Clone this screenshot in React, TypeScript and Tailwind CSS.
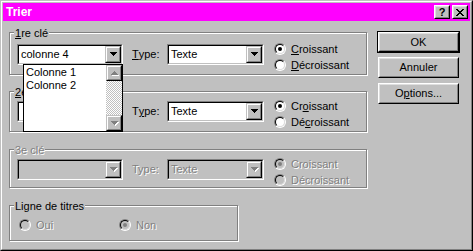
import type { ReactNode } from 'react';

const FONT = "font-['Liberation_Sans',Arial,sans-serif]";
const GRAY_TEXT = 'text-[#808080] [text-shadow:1px_1px_0_#fff]';

function Arrow({ up, disabled }: { up?: boolean; disabled?: boolean }) {
  const rows = up ? [3, 2, 1, 0] : [0, 1, 2, 3];
  const shape = (fill: string, dx: number) =>
    rows.map((r, i) => (
      <rect key={`${fill}${i}`} x={r + dx} y={i + dx} width={7 - r * 2} height={1} fill={fill} />
    ));
  return (
    <svg width="8" height="5" viewBox="0 0 8 5" shapeRendering="crispEdges">
      {disabled ? (
        <>
          {shape('#ffffff', 1)}
          {shape('#808080', 0)}
        </>
      ) : (
        shape('#000000', 0)
      )}
    </svg>
  );
}

function ArrowButton({ up, disabled, className = '' }: { up?: boolean; disabled?: boolean; className?: string }) {
  return (
    <div className={`flex w-[16px] shrink-0 border border-t-[#c0c0c0] border-l-[#c0c0c0] border-b-black border-r-black ${className}`}>
      <div className="flex flex-1 items-center justify-center border border-t-white border-l-white border-b-[#808080] border-r-[#808080] bg-[#c0c0c0] pl-[1px]">
        <Arrow up={up} disabled={disabled} />
      </div>
    </div>
  );
}

function Combo({ width, value, disabled }: { width: string; value?: string; disabled?: boolean }) {
  return (
    <div className={`flex h-[21px] shrink-0 border border-t-[#808080] border-l-[#808080] border-b-white border-r-white ${width}`}>
      <div
        className={`flex flex-1 border border-t-black border-l-black border-b-[#c0c0c0] border-r-[#c0c0c0] ${
          disabled ? 'bg-[#c0c0c0]' : 'bg-white'
        }`}
      >
        <span className={`flex-1 pl-[2px] leading-[17px] ${disabled ? GRAY_TEXT : ''}`}>{value}</span>
        <ArrowButton disabled={disabled} className="h-full" />
      </div>
    </div>
  );
}

function Radio({ checked, disabled }: { checked?: boolean; disabled?: boolean }) {
  return (
    <span className="flex h-[12px] w-[12px] shrink-0 rounded-full border border-t-[#808080] border-l-[#808080] border-b-white border-r-white">
      <span
        className={`flex flex-1 items-center justify-center rounded-full border border-t-black border-l-black border-b-[#dfdfdf] border-r-[#dfdfdf] ${
          disabled ? 'bg-[#c0c0c0]' : 'bg-white'
        }`}
      >
        {checked && (
          <span className={`h-[4px] w-[4px] rounded-full ${disabled ? 'bg-[#808080]' : 'bg-black'}`} />
        )}
      </span>
    </span>
  );
}

function RadioRow({ checked, disabled, children }: { checked?: boolean; disabled?: boolean; children: ReactNode }) {
  return (
    <div className="flex h-[16px] items-center">
      <Radio checked={checked} disabled={disabled} />
      <span className={`ml-[5px] ${disabled ? GRAY_TEXT : ''}`}>{children}</span>
    </div>
  );
}

function Group({ label, className, children }: { label: ReactNode; className: string; children: ReactNode }) {
  return (
    <div className={`flex w-[358px] flex-col border border-[#808080] shadow-[inset_1px_1px_0_#fff,1px_1px_0_#fff] ${className}`}>
      <span className="-mt-[6px] ml-[4px] self-start bg-[#c0c0c0] px-[1px]">{label}</span>
      {children}
    </div>
  );
}

function PushButton({ children, isDefault, className = '' }: { children: ReactNode; isDefault?: boolean; className?: string }) {
  const body = (
    <div className="flex h-full w-full border border-t-white border-l-white border-b-black border-r-black">
      <div className="flex flex-1 items-center justify-center border border-t-[#dfdfdf] border-l-[#dfdfdf] border-b-[#808080] border-r-[#808080]">
        {children}
      </div>
    </div>
  );
  if (isDefault) {
    return <div className={`flex border border-black ${className}`}>{body}</div>;
  }
  return <div className={`flex ${className}`}>{body}</div>;
}

function TitleButton({ children }: { children: ReactNode }) {
  return (
    <div className="flex h-[14px] w-[16px] border border-t-white border-l-white border-b-black border-r-black">
      <div className="flex flex-1 items-center justify-center border border-t-[#dfdfdf] border-l-[#dfdfdf] border-b-[#808080] border-r-[#808080] bg-[#c0c0c0]">
        {children}
      </div>
    </div>
  );
}

function KeyRow({ value, typeLabel, up, dn, disabled, list }: {
  value?: string;
  typeLabel: ReactNode;
  up: ReactNode;
  dn: ReactNode;
  disabled?: boolean;
  list?: boolean;
}) {
  return (
    <div className="ml-[7px] flex items-start">
      <div className="relative">
        <Combo width="w-[106px]" value={value} disabled={disabled} />
        {list && (
          <div className="absolute left-[6px] top-[20px] z-10 flex h-[68px] w-[100px] border border-black bg-white">
            <div className="flex flex-1 flex-col pt-[1px] pl-[2px]">
              <span className="h-[13px]">Colonne 1</span>
              <span className="h-[13px]">Colonne 2</span>
            </div>
            <div className="flex w-[16px] flex-col bg-[length:2px_2px] bg-[image:repeating-conic-gradient(#c0c0c0_0_25%,#ffffff_0_50%)]">
              <ArrowButton up disabled className="h-[16px]" />
              <div className="flex-1" />
              <ArrowButton disabled className="h-[16px]" />
            </div>
          </div>
        )}
      </div>
      <span className={`ml-[9px] flex h-[21px] w-[35px] items-center ${disabled ? GRAY_TEXT : ''}`}>{typeLabel}</span>
      <Combo width="w-[97px]" value="Texte" disabled={disabled} />
      <div className="-mt-[3px] ml-[10px] flex flex-col">
        <RadioRow checked disabled={disabled}>{up}</RadioRow>
        <RadioRow disabled={disabled}>{dn}</RadioRow>
      </div>
    </div>
  );
}

export default function App() {
  return (
    <div className={`${FONT} text-[11px] leading-[13px] text-black`}>
      <div className="flex h-[251px] w-[473px] flex-col border border-t-[#c0c0c0] border-l-[#c0c0c0] border-b-black border-r-black bg-[#c0c0c0]">
        <div className="flex flex-1 flex-col border border-t-white border-l-white border-b-[#808080] border-r-[#808080] p-[1px]">
          <div className="flex h-[18px] items-center bg-[#ff00ff] pl-[3px] pr-[2px]">
            <span className="flex-1 text-[12px] font-bold text-white">Trier</span>
            <TitleButton>
              <span className="text-[11px] font-bold leading-[10px]">?</span>
            </TitleButton>
            <div className="ml-[2px]">
              <TitleButton>
                <svg width="8" height="7" viewBox="0 0 8 7" shapeRendering="crispEdges">
                  <path d="M0 0h2v1h1v1h2V1h1V0h2v1H7v1H6v1H5v1h1v1h1v1h1v1H6V6H5V5H3v1H2v1H0V6h1V5h1V4h1V3H2V2H1V1H0z" fill="#000" />
                </svg>
              </TitleButton>
            </div>
          </div>

          <div className="flex">
            <div className="ml-[6px] mt-[11px] flex flex-col">
              <Group className="h-[43px]" label={<><u>1</u>re clé</>}>
                <div className="mt-[4px]">
                  <KeyRow
                    list
                    value="colonne 4"
                    typeLabel={<><u>T</u>ype:</>}
                    up={<><u>C</u>roissant</>}
                    dn={<><u>D</u>écroissant</>}
                  />
                </div>
              </Group>
              <Group className="mt-[16px] h-[41px]" label={<><u>2</u>e clé</>}>
                <div className="mt-[2px]">
                  <KeyRow
                    typeLabel={<>T<u>y</u>pe:</>}
                    up={<>Cr<u>o</u>issant</>}
                    dn={<>Dé<u>c</u>roissant</>}
                  />
                </div>
              </Group>
              <Group className="mt-[17px] h-[39px]" label={<span className={GRAY_TEXT}>3e clé</span>}>
                <div className="mt-[2px]">
                  <KeyRow disabled typeLabel="Type:" up="Croissant" dn="Décroissant" />
                </div>
              </Group>
              <div className="mt-[17px] flex h-[36px] w-[229px] flex-col border border-[#808080] shadow-[inset_1px_1px_0_#fff,1px_1px_0_#fff]">
                <span className="-mt-[6px] ml-[4px] self-start bg-[#c0c0c0] px-[1px]">Ligne de titres</span>
                <div className="ml-[9px] mt-[4px] flex">
                  <div className="w-[100px]">
                    <RadioRow disabled>Oui</RadioRow>
                  </div>
                  <RadioRow checked disabled>Non</RadioRow>
                </div>
              </div>
            </div>

            <div className="ml-[10px] mt-[10px] flex flex-col">
              <PushButton isDefault className="h-[22px] w-[83px]">OK</PushButton>
              <PushButton className="ml-[1px] mt-[4px] h-[21px] w-[81px]">Annuler</PushButton>
              <PushButton className="ml-[1px] mt-[5px] h-[21px] w-[81px]">
                <span>O<u>p</u>tions...</span>
              </PushButton>
            </div>
          </div>
        </div>
      </div>
    </div>
  );
}
